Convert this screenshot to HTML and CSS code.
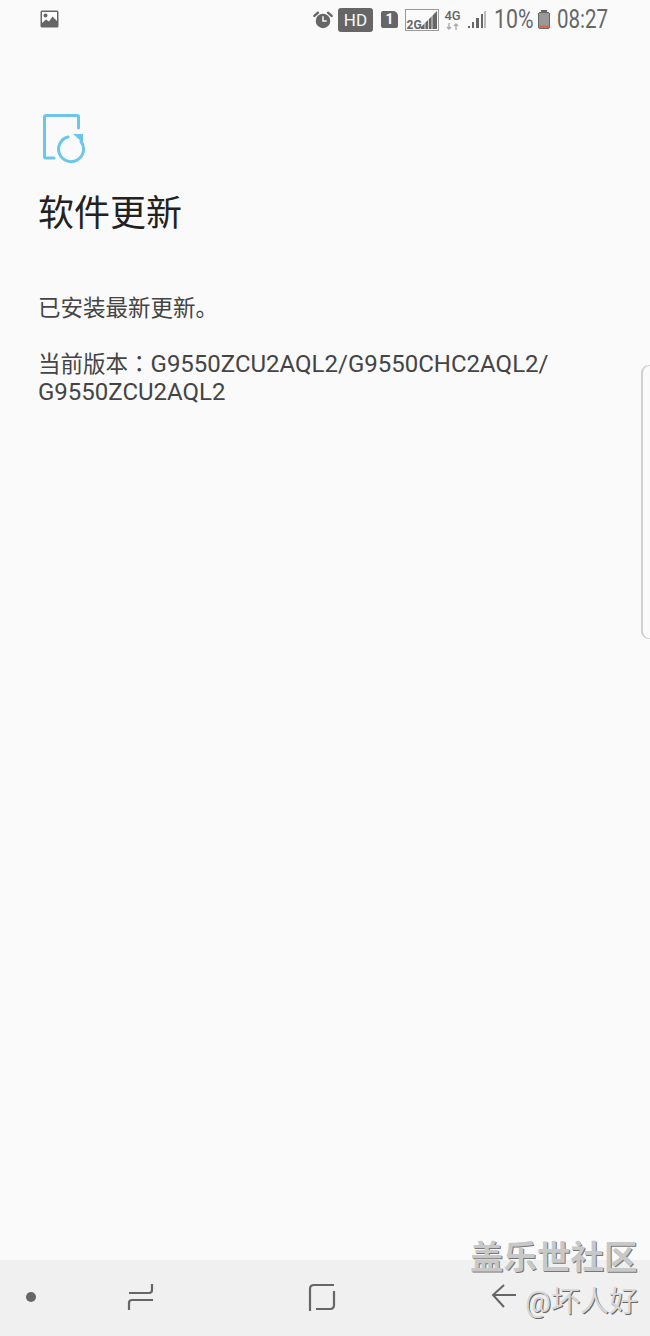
FILE: index.html
```html
<!DOCTYPE html>
<html>
    <head>
        <meta charset="UTF-8" />
        <title>软件更新</title>
        <link rel="stylesheet" href="styles.css">
    </head>
    <body>
    <div class="status-bar">
        <svg class="status-picture" width="20" height="18" viewBox="0 0 20 18">
            <rect x="0.5" y="0.5" width="18" height="17" rx="1.5" fill="#666"/>
            <rect x="2" y="2" width="15" height="14" fill="#fafafa"/>
            <circle cx="5.5" cy="5.5" r="2" fill="#666"/>
            <path d="M2 15 L2 13 L6 9.5 L9 11.5 L12.5 6.5 L17 11 L17 16 L2 16 Z" fill="#666"/>
        </svg>
        <div class="status-right">
            <svg class="status-alarm" width="20" height="20" viewBox="0 0 22 20">
                <circle cx="11" cy="11" r="8" fill="#666"/>
                <path d="M11 6 V11 H15" fill="none" stroke="#fafafa" stroke-width="1.6"/>
                <path d="M1.5 5.5 L5.5 2 M20.5 5.5 L16.5 2" stroke="#666" stroke-width="2.6" stroke-linecap="round"/>
            </svg>
            <span class="status-hd">HD</span>
            <span class="status-sim">1</span>
            <svg class="status-2g" width="35" height="24" viewBox="0 0 35 24">
                <rect x="0.5" y="1.5" width="33" height="21" fill="none" stroke="#999"/>
                <path d="M16 21 V19 L32 3 V21 Z" fill="#666"/>
                <path d="M20 21 V15 M23.5 21 V11 M27 21 V7" stroke="#fafafa" stroke-width="0.8"/>
                <text x="1.5" y="21" class="status-net-label">2G</text>
            </svg>
            <div class="status-4g">
                <span>4G</span>
                <svg width="14" height="7" viewBox="0 0 14 7">
                    <path d="M3 0 V6 M1 4 L3 6 L5 4 M10 7 V1 M8 3 L10 1 L12 3" fill="none" stroke="#aaa" stroke-width="1.4"/>
                </svg>
            </div>
            <svg class="status-signal" width="20" height="20" viewBox="0 0 20 20">
                <path d="M1 18 h2 v-2 h-2 Z M5 18 h2 v-6 h-2 Z M9 18 h3 v-10 h-3 Z M14 18 h2 v-14 h-2 Z" fill="#666"/>
                <path d="M17 18 h2 v-17 h-2 Z" fill="#bbb"/>
            </svg>
            <span class="status-text status-battery-text">10%</span>
            <svg class="status-battery" width="14" height="20" viewBox="0 0 14 20">
                <rect x="4" y="0" width="6" height="2" fill="#666"/>
                <rect x="1.5" y="2.5" width="11" height="16" rx="1.5" fill="#999" stroke="#666"/>
                <rect x="2" y="15.5" width="10" height="2.5" fill="#e0684a"/>
            </svg>
            <span class="status-text status-clock">08:27</span>
        </div>
    </div>

    <div class="content">
        <svg class="update-icon" width="44" height="50" viewBox="0 0 44 50">
            <path d="M11 44 H3 Q1.5 44 1.5 42.5 V3 Q1.5 1.5 3 1.5 H34 Q35.5 1.5 35.5 3 V14" fill="none" stroke="#6cc6e8" stroke-width="3" stroke-linecap="round"/>
            <path d="M25 23 A12.5 12.5 0 1 0 38 27.5" fill="none" stroke="#6cc6e8" stroke-width="3" stroke-linecap="round"/>
            <path d="M30 20 H40 V29 Z" fill="#6cc6e8"/>
        </svg>
        <h1 class="title">软件更新</h1>
        <p class="status-line">已安装最新更新。</p>
        <p class="version">当前版本<span class="colon">：</span><span class="latin">G9550ZCU2AQL2/G9550CHC2AQL2/</span><br><span class="latin">G9550ZCU2AQL2</span></p>
    </div>

    <div class="edge-handle"></div>

    <div class="nav-bar">
        <span class="nav-dot"></span>
        <svg class="nav-recent" width="28" height="30" viewBox="0 0 28 30">
            <path d="M2 11 H22 Q25 11 25 8 V2 M26 18 H5 Q2 18 2 21 V28" fill="none" stroke="#666" stroke-width="2.2"/>
        </svg>
        <svg class="nav-home" width="28" height="30" viewBox="0 0 28 30">
            <path d="M2 28 V6 Q2 2 6 2 H26 M26 8 V22 Q26 26 22 26 H8" fill="none" stroke="#666" stroke-width="2.2"/>
        </svg>
        <svg class="nav-back" width="26" height="28" viewBox="0 0 26 28">
            <path d="M25 12 H3 M13 2 L2 12 L13 24" fill="none" stroke="#666" stroke-width="2"/>
        </svg>
    </div>

    <div class="watermark">
        <div class="watermark-top">盖乐世社区</div>
        <div class="watermark-user">@坏人好</div>
    </div>
    </body>
</html>
```

FILE: styles.css
```css
html, body {
    margin: 0;
    padding: 0;
}
body {
    width: 650px;
    height: 1336px;
    position: relative;
    overflow: hidden;
    background-color: #fafafa;
    font-family: "Roboto", "Noto Sans CJK SC", sans-serif;
    display: flex;
    flex-direction: column;
}
.status-bar {
    height: 38px;
    display: flex;
    justify-content: space-between;
    align-items: center;
    padding: 0 42px 0 40px;
    flex-shrink: 0;
}
.status-right {
    display: flex;
    align-items: center;
    padding-top: 1px;
}
.status-hd {
    background-color: #666;
    color: #fafafa;
    font-size: 17px;
    line-height: 24px;
    width: 35px;
    text-align: center;
    border-radius: 3px;
    margin-left: 5px;
}
.status-sim {
    background-color: #666;
    color: #fafafa;
    font-size: 14px;
    font-weight: bold;
    line-height: 17px;
    width: 17px;
    text-align: center;
    border-radius: 2px 5px 2px 2px;
    margin-left: 8px;
}
.status-2g {
    margin-left: 7px;
}
.status-net-label {
    font-size: 12px;
    font-weight: bold;
    fill: #666;
}
.status-4g {
    display: flex;
    flex-direction: column;
    align-items: center;
    width: 15px;
    color: #666;
    font-size: 13px;
    font-weight: 500;
    line-height: 14px;
    margin-left: 5px;
}
.status-signal {
    margin-left: 7px;
}
.status-text {
    color: #666;
    font-size: 25px;
    line-height: 28px;
    white-space: nowrap;
    transform-origin: left center;
}
.status-battery-text {
    width: 38px;
    margin-left: 7px;
    transform: scaleX(0.85);
}
.status-battery {
    margin-left: 5px;
}
.status-clock {
    width: 51px;
    margin-left: 6px;
    transform: scaleX(0.82);
}
.content {
    padding: 76px 38px 0 38px;
    flex: 1;
}
.update-icon {
    display: block;
    margin-left: 5px;
}
.title {
    margin: 24px 0 0 0;
    font-size: 36px;
    font-weight: normal;
    line-height: 52px;
    color: #222;
}
.status-line, .version {
    font-size: 22.5px;
    line-height: 28px;
    color: #444;
    margin: 0;
}
.status-line {
    margin-top: 54px;
}
.version {
    margin-top: 28px;
}
.colon {
    font-family: "Noto Sans CJK TC", sans-serif;
    line-height: 1;
}
.latin {
    font-size: 24px;
    line-height: 1;
}
.edge-handle {
    position: absolute;
    top: 365px;
    right: -4px;
    width: 10px;
    height: 272px;
    border: 1px solid #d0d0d0;
    border-left-width: 2px;
    border-radius: 8px 0 0 8px;
}
.nav-bar {
    height: 76px;
    flex-shrink: 0;
    background-color: #f0f0f0;
    position: relative;
}
.nav-dot {
    position: absolute;
    left: 26px;
    top: 32px;
    width: 10px;
    height: 10px;
    border-radius: 50%;
    background-color: #666;
}
.nav-recent {
    position: absolute;
    left: 127px;
    top: 22px;
}
.nav-home {
    position: absolute;
    left: 308px;
    top: 23px;
}
.nav-back {
    position: absolute;
    left: 491px;
    top: 23px;
}
.watermark {
    position: absolute;
    top: 1238px;
    left: 470px;
    width: 175px;
    color: #c8c8c8;
}
.watermark-top {
    font-size: 33.5px;
    line-height: 40px;
    font-weight: bold;
    text-shadow: 1px 1px 0 #777;
    white-space: nowrap;
}
.watermark-user {
    font-size: 29px;
    line-height: 36px;
    margin: 6px 0 0 55px;
    white-space: nowrap;
    color: #d8d8d8;
    text-shadow: 1px 1px 0 #666;
}
```
